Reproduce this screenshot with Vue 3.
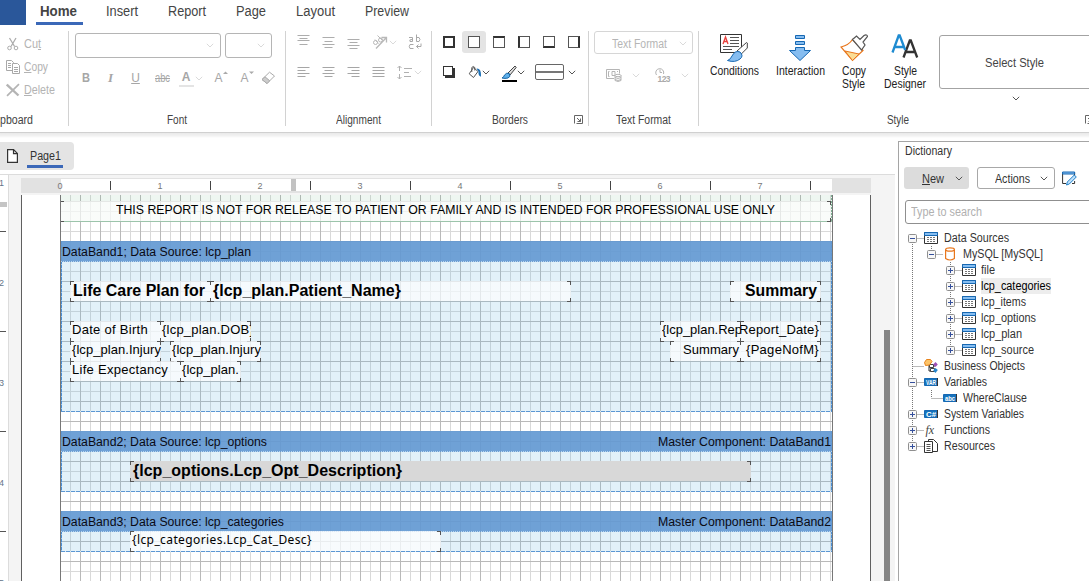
<template>
    <div class="designer">
        <nav class="tabs">
            <div class="file-tab"></div>
            <div v-for="tab in tabs" :key="tab.text" class="tab" :class="{ active: tab.active }"
                :style="{ width: tab.cell + 'px' }">
                <span v-fit="tab.w">{{ tab.text }}</span>
            </div>
        </nav>

        <header class="ribbon">
            <section class="group g-clipboard">
                <div class="clip-row">
                    <svg width="14" height="14" viewBox="0 0 14 14" fill="none" stroke="#adadad">
                        <path d="M3.5 1 8.6 9.5M10 1 5 9.5" stroke-width="1.3" />
                        <circle cx="3.5" cy="11" r="1.8" />
                        <circle cx="10" cy="11" r="1.8" />
                    </svg>
                    <span v-fit="17">Cu<u>t</u></span>
                </div>
                <div class="clip-row">
                    <svg width="14" height="14" viewBox="0 0 14 14" fill="#fff" stroke="#a8a8a8">
                        <path d="M.5 .5h5l2 2v8h-7z" />
                        <path d="M6.5 3.5h5l2 2v8h-7z" />
                        <path d="M2 3.5h3M2 5.5h3M2 7.5h3M8 7.5h4M8 9.5h4M8 11.5h4" />
                    </svg>
                    <span v-fit="24"><u>C</u>opy</span>
                </div>
                <div class="clip-row">
                    <svg width="14" height="14" viewBox="0 0 14 14" fill="none" stroke="#b4b4b4" stroke-width="2.4">
                        <path d="M.8 1.5 12.5 12.5" />
                        <path d="M13 1.2 1 12.8" stroke-width="1.7" />
                    </svg>
                    <span v-fit="31"><u>D</u>elete</span>
                </div>
                <div class="caption left"><span v-fit="33">pboard</span></div>
            </section>

            <section class="group g-font">
                <div class="combos">
                    <div class="combo wide"><svg class="chev pale" viewBox="0 0 8 5"><path d="M.8.8 4 4 7.2.8" /></svg></div>
                    <div class="combo"><svg class="chev pale" viewBox="0 0 8 5"><path d="M.8.8 4 4 7.2.8" /></svg></div>
                </div>
                <div class="font-row">
                    <b v-fit="8">B</b>
                    <i>I</i>
                    <span><u>U</u></span>
                    <span v-fit="15" class="strike">abc</span>
                    <span class="font-color">A</span>
                    <svg class="chev pale" viewBox="0 0 8 5"><path d="M.8.8 4 4 7.2.8" /></svg>
                    <span class="grow">A<svg width="5" height="4" viewBox="0 0 5 4"><path d="M0 3 2.5.5 5 3z" fill="#aaa" /></svg></span>
                    <span class="grow">A<svg width="5" height="4" viewBox="0 0 5 4"><path d="M0 .5h5L2.5 3z" fill="#aaa" /></svg></span>
                    <svg width="15" height="14" viewBox="0 0 15 14" fill="none" stroke="#aaa">
                        <path d="M1 8.5 8.5 1.2 13.5 5 6 12.5z" />
                        <path d="M1 8.5 4 5.8 8.8 9.8 6 12.5z" fill="#ccc" />
                    </svg>
                </div>
                <div class="caption"><span v-fit="20">Font</span></div>
            </section>

            <section class="group g-align">
                <div class="icon-row first">
                    <svg v-for="n in 3" :key="n" width="13" height="16" viewBox="0 0 13 16" stroke="#adadad">
                        <path :d="vertical[n - 1]" />
                    </svg>
                    <svg width="16" height="16" viewBox="0 0 16 16" fill="none" stroke="#b8b8b8">
                        <path d="M4 14.5 14 4M9.5 3.5H14.5V8.5" stroke-width="1.3" />
                        <circle cx="3.5" cy="8.5" r="2" />
                        <path d="M3 5.5 6.5 9.5M5.5 1.5 10 6" />
                        <circle cx="8.5" cy="6" r="2" />
                    </svg>
                    <svg class="chev pale" viewBox="0 0 8 5"><path d="M.8.8 4 4 7.2.8" /></svg>
                    <svg class="wrap" width="14" height="16" viewBox="0 0 14 16" fill="none" stroke="#a8a8a8">
                        <path d="M1 3.5h3.5v4h-2.5q-1.5-2 2.5-2.2M8.5.5V7.5h2.5q2-2 0-4h-2.5M5.5 10.5H2q-1.5 2 0 4h3.5M13 9.5v3H8.5M10.5 10.5 8.5 12.5l2 2" />
                    </svg>
                </div>
                <div class="icon-row second">
                    <svg v-for="(d, n) in horizontal" :key="n" width="13" height="12" viewBox="0 0 13 12"
                        stroke="#a6a6a6">
                        <path :d="d" />
                    </svg>
                    <svg width="15" height="15" viewBox="0 0 15 15" fill="none" stroke="#b0b0b0">
                        <path d="M2.5 1v5M2.5 9v5M.5 3 2.5 1l2 2M.5 12l2 2 2-2M7 3.5h8M7 7.5h5M7 11.5h7" />
                    </svg>
                    <svg class="chev pale" viewBox="0 0 8 5"><path d="M.8.8 4 4 7.2.8" /></svg>
                </div>
                <div class="caption"><span v-fit="45">Alignment</span></div>
            </section>

            <section class="group g-borders">
                <div class="border-row">
                    <div v-for="(b, n) in borderIcons" :key="n" class="border-btn" :class="{ on: n === 1 }">
                        <i class="square" :class="b"></i>
                    </div>
                </div>
                <div class="border-tools">
                    <i class="square shadow"></i>
                    <svg class="bucket" width="14" height="14" viewBox="0 0 14 14" fill="none">
                        <path d="M5.5 2.5 10 6.5 5.5 12.5 1.2 8.8z" stroke="#555" />
                        <path d="M3.8 7V2.5q1.5-2 3 0v3" stroke="#555" />
                        <path d="M8.5 3.5q5-.5 4.5 8.3-3-1-2.5-5.3z" fill="#1b6fb5" />
                    </svg>
                    <svg class="chev" viewBox="0 0 8 5"><path d="M.8.8 4 4 7.2.8" /></svg>
                    <svg class="brush" width="16" height="18" viewBox="0 0 16 18">
                        <path d="M7 8 14 1l1.2 1.5L9 10z" fill="#ddd" stroke="#444" />
                        <path d="M1 13q2-1 2.5-3 2-3 5-1.2 1.5 3-1.5 4.2-3 .8-6 0z" fill="#5fb0ea" stroke="#1464a5" />
                        <path d="M1 15h15v2H1z" fill="#000" />
                    </svg>
                    <svg class="chev" viewBox="0 0 8 5"><path d="M.8.8 4 4 7.2.8" /></svg>
                    <i class="line-style"></i>
                    <svg class="chev" viewBox="0 0 8 5"><path d="M.8.8 4 4 7.2.8" /></svg>
                </div>
                <div class="caption"><span v-fit="36">Borders</span></div>
                <svg class="launcher" viewBox="0 0 9 9"><path d="M.5 8.5V.5h8v8h-6M3 3l3.5 3.5M6.5 3.5v3h-3" /></svg>
            </section>

            <section class="group g-format">
                <div class="format-combo">
                    <span v-fit="55">Text Format</span>
                    <svg class="chev pale" viewBox="0 0 8 5"><path d="M.8.8 4 4 7.2.8" /></svg>
                </div>
                <div class="format-row">
                    <svg width="16" height="14" viewBox="0 0 16 14" fill="none" stroke="#b5b5b5">
                        <path d="M8 10.5H.5v-9h13v4M3.5 3.5h-1v5h1M6 3.5h3v4H6zM11 3.5h1" />
                        <ellipse cx="12" cy="7.5" rx="3" ry="1.2" />
                        <path d="M9 7.5v5q3 2 6 0v-5M9 9.5q3 2 6 0M9 11.5q3 2 6 0" />
                    </svg>
                    <svg class="chev pale" viewBox="0 0 8 5"><path d="M.8.8 4 4 7.2.8" /></svg>
                    <svg class="clock" width="16" height="16" viewBox="0 0 16 16" fill="none" stroke="#b5b5b5">
                        <path d="M1.5 8A4 4 0 1 1 8.5 7M5 2.5v3h2" />
                        <text x="2.5" y="15" font-size="8.5" font-weight="bold" fill="#aaa" stroke="none"
                            textLength="13">123</text>
                    </svg>
                    <svg class="chev pale" viewBox="0 0 8 5"><path d="M.8.8 4 4 7.2.8" /></svg>
                </div>
                <div class="caption"><span v-fit="55">Text Format</span></div>
            </section>

            <section class="group g-style">
                <div class="big">
                    <svg width="28" height="30" viewBox="0 0 28 30" fill="none">
                        <path d="M.5 1.5h21v18H.5z" fill="#fff" stroke="#333" />
                        <path d="M3 11 5.5 4 8 11M4 8.5h3" stroke="#e8403c" stroke-width="1.3" />
                        <path d="M10 4.5h9M10 7.5h9M10 10.5h9M3 13.5h16M3 16.5h9" stroke="#555" />
                        <path d="m17 18 9.5-8.5.8.5v5l-6 6z" fill="#fff" stroke="#444" />
                        <path d="M7.5 27.5q3-1 4.5-4.5 3-6 8-4 4 4 0 7-5 4-12.5 1.5z" fill="#86bdf0" stroke="#1668b3" />
                    </svg>
                    <span v-fit="49">Conditions</span>
                </div>
                <div class="big">
                    <svg width="24" height="30" viewBox="0 0 24 30" fill="#86bdf0" stroke="#1668b3">
                        <path d="M7.5 2.5h9v3h-9zM7.5 8.5h9v3h-9zM7.5 14.5h9v3h6L12 27.5 1.5 17.5h6z" />
                    </svg>
                    <span v-fit="49">Interaction</span>
                </div>
                <div class="big">
                    <svg width="28" height="30" viewBox="0 0 28 30" fill="none">
                        <path d="M1 14Q9 12 12.5 6.5L23 17.5 12.5 27.5z" fill="#fff" stroke="#e8761c" stroke-width="1.2" />
                        <path d="M5 18 19 21 12.5 27.5z" fill="#fbdd95" stroke="#e8761c" />
                        <path d="m12.500 6.500 4-3.500 3.500 3.500 4-4q3-1.500 3.500 1l-4.500 5.500 2 3-3.500 5z" fill="#fff" stroke="#555" stroke-width="1.2" />
                    </svg>
                    <span v-fit="24">Copy</span>
                    <span v-fit="23">Style</span>
                </div>
                <div class="big">
                    <svg width="28" height="30" viewBox="0 0 28 30" fill="none" stroke-width="2.3">
                        <path d="M12.5 24.5 18.8 7.5h1L26.2 24.5M14.5 19h9.5" stroke="#333" />
                        <path d="M1.5 19.5 7.7 2.5h1L14.2 17M3.5 14h9" stroke="#1e8bd1" />
                    </svg>
                    <span v-fit="23">Style</span>
                    <span v-fit="42">Designer</span>
                </div>
                <div class="gallery">
                    <div class="gallery-box"><span v-fit="59">Select Style</span></div>
                    <svg class="chev" viewBox="0 0 8 5"><path d="M.8.8 4 4 7.2.8" /></svg>
                </div>
                <div class="caption"><span v-fit="22">Style</span></div>
                <svg class="launcher" viewBox="0 0 9 9"><path d="M.5 8.5V.5h8v8h-6M3 3l3.5 3.5M6.5 3.5v3h-3" /></svg>
            </section>
        </header>

        <div class="workspace">
            <main class="editor">
                <div class="page-tabs">
                    <div class="page-tab">
                        <svg width="11" height="14" viewBox="0 0 11 14" fill="#fff" stroke="#333">
                            <path d="M.6.6h6l3.8 3.8v9H.6zM6.5.6v4h4" stroke-width="1.2" />
                        </svg>
                        <span class="page-name"><span v-fit="31">Page1</span></span>
                    </div>
                </div>

                <div class="viewport">
                    <div class="ruler-v">
                        <svg width="9" height="406" viewBox="0 175 9 406">
                            <path v-for="y in [231, 331, 431, 531]" :key="y" :d="`M0 ${y}.5h6`" stroke="#555" />
                            <path d="M0 202h7v5H0z" fill="#c4c4c4" />
                            <text v-for="n in 5" :key="n" x="-1" :y="85.5 + n * 100" font-size="9"
                                fill="#667488">{{ n }}</text>
                        </svg>
                    </div>
                    <div class="surface">
                        <div class="ruler-h">
                            <svg width="850" height="15" viewBox="21 178 850 15">
                                <path d="M61 179h771v12H61z" fill="#fff" />
                                <path d="M291 179h5v12h-5z" fill="#c2c2c2" />
                                <path v-for="n in 8" :key="n" :d="`M${n * 100 + 10}.5 181v9`" stroke="#444" />
                                <text v-for="n in 8" :key="n" :x="n * 100 - 40" y="188.5" font-size="9"
                                    text-anchor="middle" fill="#777">{{ n - 1 }}</text>
                            </svg>
                        </div>
                        <div class="paper">
                            <div class="grid">
                                <div v-for="band in bands" :key="band.y" class="band" :class="band.kind"
                                    :style="{ top: band.y - 195 + 'px', height: band.h + 'px' }">
                                    <div v-if="band.name" class="band-head">
                                        <span v-fit="band.w">{{ band.name }}</span>
                                        <span v-if="band.master" v-fit="173">{{ band.master }}</span>
                                    </div>
                                </div>
                                <div v-for="(c, n) in components" :key="n" class="component" :class="c.cls"
                                    :style="box(c)">
                                    <span v-fit="c.tw">{{ c.text }}</span>
                                </div>
                            </div>
                        </div>
                    </div>
                    <div class="scrollbar"><div class="thumb"></div></div>
                </div>
            </main>

            <aside class="dictionary">
                <div class="title"><span v-fit="47">Dictionary</span></div>
                <div class="toolbar">
                    <button class="btn filled"><span v-fit="22"><u>N</u>ew</span><svg class="chev" viewBox="0 0 8 5"><path d="M.8.8 4 4 7.2.8" /></svg></button>
                    <button class="btn actions"><span v-fit="35">Actions</span><svg class="chev" viewBox="0 0 8 5"><path d="M.8.8 4 4 7.2.8" /></svg></button>
                    <svg class="edit" width="15" height="15" viewBox="0 0 15 15" fill="none">
                        <path d="M4 12.5H.6V1.5h12v3M12.6 10v2.5H10" stroke="#333" />
                        <path d="M.6 1h12v2H.6z" fill="#86bdf0" stroke="#1668b3" />
                        <path d="m4.5 14 .8-3 7-7 2 2-7 7z" fill="#bfe0fa" stroke="#1e7fc8" />
                    </svg>
                </div>
                <div class="search"><span v-fit="71">Type to search</span></div>

                <div class="tree">
                    <svg class="guides" width="70" height="224" viewBox="904 230 70 224">
                        <path d="M912.5 242V446M931.5 246v8M950.5 262v88M931.5 390v8" />
                        <path v-for="(row, n) in tree" :key="n"
                            :d="`M${912.5 + row.level * 19} ${238.5 + n * 16}h12`" />
                    </svg>
                    <div v-for="row in tree" :key="row.text" class="node" :class="'level-' + row.level">
                        <span class="expander">
                            <svg v-if="row.mark" width="9" height="9" viewBox="0 0 9 9">
                                <rect x=".5" y=".5" width="8" height="8" rx="1" fill="#f7f7f7" stroke="#8f8f8f" />
                                <path :d="row.mark === '+' ? 'M2 4.5h5M4.5 2v5' : 'M2 4.5h5'" stroke="#35509c" />
                            </svg>
                        </span>
                        <svg class="node-icon" width="14" height="14" viewBox="0 0 14 14" fill="none">
                            <template v-if="row.icon === 'table'">
                                <path d="M.5 1.5h13v11H.5z" fill="#fff" stroke="#333" />
                                <path d="M.5 1.5h13v3H.5z" fill="#86bdf0" stroke="#1668b3" />
                                <path d="M3 6.5h8M3 8.5h8M3 10.5h8" stroke="#777" stroke-dasharray="2 1" />
                            </template>
                            <template v-else-if="row.icon === 'db'">
                                <path d="M2.6 2.5v9q4.4 3 8.8 0v-9" stroke="#e8761c" stroke-width="1.2" />
                                <ellipse cx="7" cy="2.5" rx="4.4" ry="1.7" stroke="#e8761c" stroke-width="1.2" />
                            </template>
                            <template v-else-if="row.icon === 'objects'">
                                <path d="M5 6v6h5M6 7h5" stroke="#333" />
                                <path d="M5.5 5.5h4v3h-4zM6.5 9.5h4v3h-4z" fill="#fff" stroke="#444" />
                                <path d="M.5 3.5 2.5.5h4L8 2.5 5.5 6 1.5 6.5z" fill="#fdc468" stroke="#e8831c" />
                                <path d="m11.5 3 2.3 2.5-2.3 2.5-2.3-2.5z" fill="#9d50b5" />
                                <path d="m11.5 9 2.3 2-2.3 3-2.3-2.5z" fill="#2685cd" />
                            </template>
                            <template v-else-if="row.icon === 'fx'">
                                <text x="1.5" y="10.5" font-family="Liberation Serif, serif" font-style="italic"
                                    font-size="12" fill="#444">fx</text>
                            </template>
                            <template v-else-if="row.icon === 'pages'">
                                <path d="M4.5 2.5V.5h5l4 4v8h-5" fill="#fff" stroke="#333" />
                                <path d="M.5 2.5h8v11h-8z" fill="#fff" stroke="#333" />
                                <path d="M2.5 5.5h4M2.5 7.5h4M2.5 9.5h4M2.5 11.5h4" stroke="#555" />
                            </template>
                            <template v-else>
                                <path d="M.5 3.5h13v7H.5z" fill="#1673bd" stroke="#1668b3" />
                                <path d="M13.5 3v8" stroke="#333" />
                                <text x="2" y="9.5" font-size="7" font-weight="bold" textLength="10"
                                    lengthAdjust="spacingAndGlyphs" fill="#fff">{{ row.icon }}</text>
                            </template>
                        </svg>
                        <span class="node-text" :class="{ selected: row.selected }"><span v-fit="row.w">{{ row.text }}</span></span>
                    </div>
                </div>
            </aside>
        </div>
    </div>
</template>

<script setup>
// Makes a label take exactly the given width: long ones are condensed, short ones spaced out
const vFit = {
    mounted(el, { value }) {
        if (!value) return
        const width = el.getBoundingClientRect().width
        if (value < width) {
            el.style.display = 'inline-block'
            el.style.transformOrigin = '0 50%'
            el.style.transform = `scaleX(${value / width})`
            el.style.marginRight = value - width + 'px'
        } else {
            el.style.letterSpacing = (value - width) / el.textContent.length + 'px'
        }
    }
}

const tabs = [
    { text: 'Home', w: 37, cell: 47, active: true },
    { text: 'Insert', w: 32, cell: 32 },
    { text: 'Report', w: 38, cell: 38 },
    { text: 'Page', w: 30, cell: 30 },
    { text: 'Layout', w: 39, cell: 39 },
    { text: 'Preview', w: 44, cell: 44 }
]

const vertical = [
    'M.5 1.5h12M2.5 4.5h8M.5 6.5h12M2.5 10.5h8',
    'M.5 3.5h12M2.5 7.5h8M.5 10.5h12M2.5 13.5h8',
    'M.5 5.5h12M2.5 8.5h8M.5 11.5h12M2.5 14.5h8'
]

const horizontal = [
    'M.5 1.5h12M.5 4.5h8M.5 7.5h12M.5 10.5h8',
    'M.5 1.5h12M2.5 4.5h8M.5 7.5h12M2.5 10.5h8',
    'M.5 1.5h12M4.5 4.5h8M.5 7.5h12M4.5 10.5h8',
    'M.5 1.5h12M.5 4.5h12M.5 7.5h12M.5 10.5h12'
]

const borderIcons = ['all', 'none', 'top', 'left', 'bottom', 'right']

const bands = [
    { y: 195, h: 27, kind: 'footer' },
    { y: 241, h: 171, kind: 'data', name: 'DataBand1; Data Source: lcp_plan', w: 189 },
    { y: 431, h: 61, kind: 'data', name: 'DataBand2; Data Source: lcp_options', w: 205, master: 'Master Component: DataBand1' },
    { y: 511, h: 41, kind: 'data', name: 'DataBand3; Data Source: lcp_categories', w: 222, master: 'Master Component: DataBand2' }
]

const components = [
    { x: 60, y: 201, w: 771, text: 'THIS REPORT IS NOT FOR RELEASE TO PATIENT OR FAMILY AND IS INTENDED FOR PROFESSIONAL USE ONLY', tw: 659, cls: 'notice' },
    { x: 70, y: 281, w: 141, text: 'Life Care Plan for', tw: 132, cls: 'heading' },
    { x: 210, y: 281, w: 361, text: '{lcp_plan.Patient_Name}', tw: 188, cls: 'heading' },
    { x: 730, y: 281, w: 91, text: 'Summary', tw: 72, cls: 'heading end' },
    { x: 70, y: 321, w: 91, text: 'Date of Birth', tw: 76 },
    { x: 160, y: 321, w: 91, text: '{lcp_plan.DOB}', tw: 92 },
    { x: 70, y: 341, w: 91, text: '{lcp_plan.Injury', tw: 89 },
    { x: 170, y: 341, w: 91, text: '{lcp_plan.Injury', tw: 89 },
    { x: 70, y: 361, w: 111, text: 'Life Expectancy', tw: 96 },
    { x: 180, y: 361, w: 61, text: '{lcp_plan.', tw: 57 },
    { x: 660, y: 321, w: 81, text: '{lcp_plan.Rep', tw: 80 },
    { x: 740, y: 321, w: 81, text: 'Report_Date}', tw: 80, cls: 'end' },
    { x: 670, y: 341, w: 71, text: 'Summary', tw: 56, cls: 'end' },
    { x: 740, y: 341, w: 81, text: '{PageNofM}', tw: 73, cls: 'end' },
    { x: 130, y: 461, w: 621, text: '{lcp_options.Lcp_Opt_Description}', tw: 269, cls: 'heading gray' },
    { x: 130, y: 531, w: 311, text: '{lcp_categories.Lcp_Cat_Desc}', tw: 180, cls: 'noto' }
]

const box = (c) => ({
    left: c.x - 60 + 'px',
    top: c.y - 195 + 'px',
    width: c.w + 'px'
})

const tree = [
    { level: 0, mark: '-', icon: 'table', text: 'Data Sources', w: 65 },
    { level: 1, mark: '-', icon: 'db', text: 'MySQL [MySQL]', w: 80 },
    { level: 2, mark: '+', icon: 'table', text: 'file', w: 14 },
    { level: 2, mark: '+', icon: 'table', text: 'lcp_categories', w: 70, selected: true },
    { level: 2, mark: '+', icon: 'table', text: 'lcp_items', w: 45 },
    { level: 2, mark: '+', icon: 'table', text: 'lcp_options', w: 55 },
    { level: 2, mark: '+', icon: 'table', text: 'lcp_plan', w: 41 },
    { level: 2, mark: '+', icon: 'table', text: 'lcp_source', w: 53 },
    { level: 0, mark: '', icon: 'objects', text: 'Business Objects', w: 81 },
    { level: 0, mark: '-', icon: 'VAR', text: 'Variables', w: 43 },
    { level: 1, mark: '', icon: 'abc', text: 'WhereClause', w: 64 },
    { level: 0, mark: '+', icon: 'C#', text: 'System Variables', w: 80 },
    { level: 0, mark: '+', icon: 'fx', text: 'Functions', w: 46 },
    { level: 0, mark: '+', icon: 'pages', text: 'Resources', w: 51 }
]
</script>

<style>
body {
    margin: 0;
    overflow: hidden;
}
</style>

<style scoped>
.designer {
    width: 1089px;
    height: 581px;
    overflow: hidden;
    display: flex;
    flex-direction: column;
    background: #fff;
    color: #333;
    font: 12px "Liberation Sans", Arial, sans-serif;
    white-space: nowrap;
}

.designer * {
    box-sizing: border-box;
}

svg {
    display: block;
    flex-shrink: 0;
}

/* Tabs */
.tabs {
    display: flex;
    height: 25px;
    flex-shrink: 0;
    font-size: 14px;
    gap: 30px;
    color: #444;
}

.file-tab {
    width: 26px;
    height: 25px;
    background: #2a579a;
    margin-right: -20px;
}

.tab {
    height: 25px;
    line-height: 22px;
}

.tab.active {
    padding-left: 4px;
    font-weight: bold;
    border-bottom: 3px solid #3b68b8;
    margin-right: -7px;
}

/* Ribbon */
.ribbon {
    display: flex;
    height: 108px;
    flex-shrink: 0;
    padding-top: 6px;
    border-bottom: 1px solid #d0d0d0;
}

.group {
    position: relative;
    height: 95px;
    flex-shrink: 0;
    border-right: 1px solid #d2d2d2;
}

.caption {
    position: absolute;
    left: 0;
    right: 0;
    bottom: -2px;
    text-align: center;
    line-height: 15px;
    color: #444;
}

.caption.left {
    text-align: left;
}

.chev {
    width: 8px;
    height: 5px;
    fill: none;
    stroke: #555;
}

.chev.pale {
    stroke: #dadada;
}

.launcher {
    position: absolute;
    right: 5px;
    bottom: 2px;
    width: 9px;
    height: 9px;
    fill: none;
    stroke: #666;
}

.g-clipboard {
    width: 69px;
    padding: 1px 0 0 6px;
}

.clip-row {
    display: flex;
    align-items: center;
    gap: 4px;
    height: 23px;
    color: #b3b3b3;
}

.g-font {
    width: 217px;
}

.combos {
    display: flex;
    gap: 4px;
    padding: 2px 0 0 6px;
}

.combo {
    display: flex;
    align-items: center;
    justify-content: flex-end;
    width: 47px;
    height: 25px;
    padding-right: 6px;
    border: 1px solid #b5b5b5;
    border-radius: 3px;
}

.combo.wide {
    width: 146px;
}

.font-row {
    display: grid;
    grid-template-columns: 24px 25px 25px 29px 18px 8px 30px 22px 26px;
    align-items: center;
    justify-items: center;
    height: 24px;
    margin: 8px 0 0 5px;
    color: #a6a6a6;
    line-height: 14px;
}

.font-row i {
    font-family: "Liberation Serif", serif;
    font-weight: bold;
    font-size: 13px;
}

.strike {
    text-decoration: line-through;
}

.font-color {
    width: 15px;
    height: 17px;
    margin-top: 1px;
    text-align: center;
    border-bottom: 2px solid #e4e4e4;
    font-weight: bold;
}

.grow {
    display: flex;
    padding-left: 6px;
}

.g-align {
    width: 146px;
}

.icon-row {
    display: flex;
    align-items: center;
    padding-left: 11px;
    height: 16px;
    gap: 12px;
}

.icon-row.first {
    margin-top: 3px;
}

.icon-row.first .chev {
    margin-left: -11px;
}

.icon-row .wrap {
    margin-left: -1px;
}

.icon-row.second {
    margin-top: 14px;
}

.icon-row.second .chev {
    margin-left: -10px;
}

.g-borders {
    width: 157px;
}

.border-row {
    display: flex;
    padding-left: 5px;
    gap: 1px;
}

.border-btn {
    display: flex;
    align-items: center;
    justify-content: center;
    width: 24px;
    height: 22px;
    border-radius: 3px;
}

.border-btn.on {
    background: #e4e4e4;
}

.square {
    width: 12px;
    height: 12px;
    background: #fff;
    border: 1px solid #555;
}

.square.all {
    border: 2px solid #333;
}

.square.top {
    border-top: 2px solid #333;
}

.square.left {
    border-left: 2px solid #333;
}

.square.bottom {
    border-bottom: 2px solid #333;
}

.square.right {
    border-right: 2px solid #333;
}

.square.shadow {
    width: 10px;
    height: 10px;
    margin: 0 2px 2px 0;
    border-color: #333;
    box-shadow: 2px 2px 0 #333;
}

.border-tools {
    display: flex;
    align-items: center;
    height: 22px;
    margin-top: 8px;
    padding-left: 11px;
}

.bucket {
    margin: 0 0 0 13px;
}

.brush {
    margin: 4px 0 0 11px;
}

.line-style {
    width: 29px;
    height: 16px;
    margin: 0 4px 0 10px;
    border: 1px solid #666;
    border-radius: 2px;
    background: linear-gradient(#777, #777) 0 6px / 100% 2px no-repeat;
}

.g-format {
    width: 110px;
}

.format-combo {
    display: flex;
    align-items: center;
    justify-content: flex-end;
    gap: 12px;
    width: 99px;
    height: 23px;
    margin-left: 5px;
    padding: 2px 5px 0 0;
    border: 1px solid #d6d6d6;
    border-radius: 3px;
    color: #b5b5b5;
}

.format-row {
    display: flex;
    align-items: center;
    height: 18px;
    margin-top: 12px;
    padding-left: 17px;
    gap: 10px;
}

.format-row .clock {
    margin-left: 5px;
}

.g-style {
    display: flex;
    width: 400px;
    padding-left: 4px;
    border-right: 0;
}

.g-style .caption {
    width: 398px;
}

.g-style .launcher {
    right: 5px;
}

.big {
    display: flex;
    flex-direction: column;
    align-items: center;
    width: 62px;
    padding-top: 2px;
    line-height: 13px;
    color: #222;
}

.big svg {
    margin-bottom: 2px;
}

.big:nth-child(2) {
    width: 70px;
}

.big:nth-child(3) {
    width: 37px;
}

.big:nth-child(4) {
    width: 66px;
}

.gallery {
    display: flex;
    flex-direction: column;
    align-items: center;
    width: 153px;
    margin-left: 1px;
    gap: 7px;
    padding-top: 4px;
}

.gallery-box {
    display: flex;
    align-items: center;
    justify-content: center;
    width: 153px;
    height: 54px;
    padding: 2px 2px 0 0;
    border: 1px solid #a3a3a3;
    border-radius: 3px;
    color: #444;
}

/* Workspace */
.workspace {
    display: flex;
    flex: 1;
    min-height: 0;
    background: linear-gradient(#e9e9e9, #f3f3f3 3px, #fff 5px);
}

.editor {
    display: flex;
    flex-direction: column;
    width: 895px;
}

.page-tabs {
    height: 42px;
    padding-top: 9px;
    border-bottom: 1px solid #dcdcdc;
}

.page-tab {
    display: flex;
    align-items: center;
    gap: 9px;
    width: 74px;
    height: 28px;
    padding-left: 7px;
    background: #e4e4e4;
    border-radius: 0 4px 4px 0;
}

.page-name {
    width: 36px;
    height: 19px;
    margin-top: 4px;
    padding-left: 3px;
    line-height: 14px;
    border-bottom: 3px solid #3b68b8;
}

.viewport {
    display: flex;
    flex: 1;
    min-height: 0;
    background: #f4f4f4;
}

.ruler-v {
    width: 9px;
    background: #fff;
    border-right: 1px solid #dcdcdc;
}

.surface {
    display: flex;
    flex-direction: column;
    width: 850px;
    margin-left: 12px;
    padding-top: 3px;
}

.ruler-h {
    height: 15px;
    background: #e2e2e2;
}

.paper {
    flex: 1;
    margin-top: 2px;
    padding-left: 38px;
    background: #fff;
    border: solid #606060;
    border-width: 0 1px;
}

/* Grid of the page, dark line every second step */
.grid {
    position: relative;
    width: 773px;
    height: 386px;
    border-right: 1px solid #777;
    border-left: 1px solid #777;
    background:
        repeating-linear-gradient(90deg, transparent 0 19px, #b9b9b9 19px 20px),
        linear-gradient(#b9b9b9, #b9b9b9) 0 6px / 100% 1px no-repeat,
        repeating-linear-gradient(transparent 0 6px, #b9b9b9 6px 7px, transparent 7px 20px),
        repeating-linear-gradient(90deg, transparent 0 9px, #d9d9d9 9px 10px),
        repeating-linear-gradient(transparent 0 6px, #d9d9d9 6px 7px, transparent 7px 10px);
    overflow: hidden;
}

.band {
    position: absolute;
    left: 0;
    right: 0;
}

.band.footer {
    background:
        linear-gradient(#9cc4ab, #9cc4ab) 0 100% / 100% 1px no-repeat,
        repeating-linear-gradient(#7fb093 0 2px, transparent 2px 3px) 100% 0 / 1px 100% no-repeat,
        rgba(100, 170, 125, 0.11);
}

.band.data {
    background:
        repeating-linear-gradient(90deg, #5c97d3 0 4px, #d5e7f5 4px 5px) 0 100% / 100% 1px no-repeat,
        repeating-linear-gradient(#4a8fd6 0 3px, #9cc4ea 3px 4px) 0 0 / 1px 100% no-repeat,
        repeating-linear-gradient(#4a8fd6 0 3px, #9cc4ea 3px 4px) 100% 0 / 1px 100% no-repeat,
        rgba(110, 187, 226, 0.2);
}

.band-head {
    display: flex;
    justify-content: space-between;
    height: 21px;
    padding: 0 1px;
    line-height: 22px;
    font-size: 12.5px;
    color: #0a0a14;
    background: rgba(99, 152, 209, 0.9);
    border-bottom: 1px dotted #b7d5ef;
}

.component {
    --c: linear-gradient(#555, #555);
    --fill: rgba(255, 255, 255, 0.68);
    position: absolute;
    margin-left: -1px;
    height: 21px;
    padding: 0 2px;
    overflow: hidden;
    line-height: 18px;
    font-size: 13px;
    color: #000;
    background:
        var(--c) 0 0 / 4px 1px, var(--c) 0 0 / 1px 4px,
        var(--c) 100% 0 / 4px 1px, var(--c) 100% 0 / 1px 4px,
        var(--c) 0 100% / 4px 1px, var(--c) 0 100% / 1px 4px,
        var(--c) 100% 100% / 4px 1px, var(--c) 100% 100% / 1px 4px,
        linear-gradient(var(--fill), var(--fill)) 0 0 / 100% 20px;
    background-repeat: no-repeat;
}

.component.heading {
    padding: 0 3px;
    font-size: 16px;
    font-weight: bold;
    line-height: 19px;
}

.component.end {
    display: flex;
    justify-content: flex-end;
}

.component.heading.end {
    padding-right: 4px;
}

.component.notice {
    text-align: center;
    line-height: 17px;
}

.component.gray {
    --fill: #d8d8d8;
}

.component.noto {
    --fill: rgba(255, 255, 255, 0.75);
    font-family: "Noto Sans", sans-serif;
    font-size: 12px;
    line-height: 17px;
}

.scrollbar {
    display: flex;
    flex-direction: column;
    justify-content: flex-end;
    width: 6px;
    margin-left: 13px;
}

.thumb {
    height: 251px;
    background: #858585;
}

/* Dictionary */
.dictionary {
    flex: 1;
    margin: 8px 0 0 3px;
    padding-left: 6px;
    border: solid #a5a5a5;
    border-width: 1px 0 0 1px;
    background: #fff;
    overflow: hidden;
}

.title {
    height: 25px;
    line-height: 19px;
}

.toolbar {
    display: flex;
    align-items: center;
    height: 22px;
    gap: 8px;
    margin-left: -1px;
}

.btn {
    display: flex;
    align-items: center;
    justify-content: flex-end;
    gap: 11px;
    width: 65px;
    height: 22px;
    padding: 1px 6px 0 0;
    border: 0;
    border-radius: 3px;
    background: #dcdcdc;
    font: inherit;
    color: #333;
}

.btn.actions {
    width: 78px;
    gap: 10px;
    border: 1px solid #a8a8a8;
    background: #fff;
}

.edit {
    margin-left: -1px;
}

.search {
    width: 200px;
    height: 24px;
    margin-top: 11px;
    padding-left: 5px;
    line-height: 22px;
    border: 1px solid #8f8f8f;
    border-radius: 3px;
    color: #b0b0b0;
}

.tree {
    position: relative;
    margin: 6px 0 0 -1px;
}

.guides {
    position: absolute;
    left: 0;
    top: 0;
    stroke: #777;
    stroke-dasharray: 1 1;
}

.node {
    position: relative;
    display: flex;
    align-items: center;
    height: 16px;
    padding-left: 4px;
}

.node.level-1 {
    padding-left: 23px;
}

.node.level-2 {
    padding-left: 42px;
}

.expander {
    width: 9px;
    margin-right: 7px;
}

.node-icon {
    background: #fff;
}

.node-text {
    margin-left: 6px;
    height: 16px;
    line-height: 16px;
}

.level-2 .node-text {
    margin-left: 5px;
}

.node-text.selected {
    background: #ededed;
    color: #000;
}
</style>
